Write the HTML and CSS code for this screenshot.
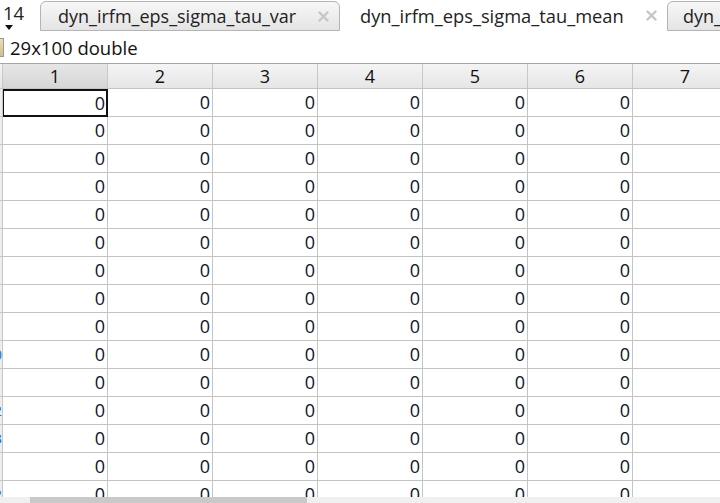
FILE: index.html
```html
<!DOCTYPE html>
<html lang="en">
<head>
    <meta charset="UTF-8">
    <title>Variables - dyn_irfm_eps_sigma_tau_mean</title>
    <link rel="stylesheet" href="styles.css">
</head>
<body>
<div class="tabbar">
    <div class="tab-menu">
        <span class="tab-count">14</span>
        <span class="tab-arrow"></span>
    </div>
    <div class="tab tab-first">
        <span class="tab-name">dyn_irfm_eps_sigma_tau_var</span>
        <svg class="tab-close" width="11" height="11" viewBox="0 0 11 11"><path d="M1.5 1.5 L9.5 9.5 M9.5 1.5 L1.5 9.5"/></svg>
    </div>
    <div class="tab tab-active">
        <span class="tab-name">dyn_irfm_eps_sigma_tau_mean</span>
        <svg class="tab-close" width="11" height="11" viewBox="0 0 11 11"><path d="M1.5 1.5 L9.5 9.5 M9.5 1.5 L1.5 9.5"/></svg>
    </div>
    <div class="tab tab-last">
        <span class="tab-name">dyn_irfm_eps_sigma_tau_std</span>
    </div>
</div>

<div class="info">
    <span class="info-icon"></span>
    <span class="info-text">29x100 double</span>
</div>

<div class="sheet">
    <div class="grid" id="grid">
        <div class="corner"></div>
        <div class="colhead selected">1</div>
        <div class="colhead">2</div>
        <div class="colhead">3</div>
        <div class="colhead">4</div>
        <div class="colhead">5</div>
        <div class="colhead">6</div>
        <div class="colhead">7</div>
    </div>
    <div class="scrollbar">
        <div class="scroll-thumb"></div>
    </div>
</div>

<script>
    const grid = document.getElementById("grid");
    const marks = { 9: "0", 11: "2", 12: "3", 13: "1", 14: "2" };

    for (let r = 0; r < 15; r++) {
        const side = document.createElement("div");
        side.className = "rowhead";
        side.textContent = marks[r] || "";
        grid.appendChild(side);

        for (let c = 0; c < 7; c++) {
            const cell = document.createElement("div");
            cell.className = "cell";
            if (r === 0 && c === 0) cell.classList.add("current");
            cell.textContent = c < 6 ? "0" : "";
            grid.appendChild(cell);
        }
    }
</script>
</body>
</html>
```

FILE: styles.css
```css
* {
    box-sizing: border-box;
}

body {
    margin: 0;
    width: 720px;
    height: 503px;
    overflow: hidden;
    background: #fff;
    font-family: "Open Sans", "Noto Sans", sans-serif;
    color: #1a1a1a;
}

.tabbar {
    display: flex;
    height: 31px;
    background: #fff;
    overflow: hidden;
}

.tab-menu {
    position: relative;
    width: 40px;
    flex: none;
}

.tab-count {
    display: block;
    padding: 1px 0 0 3px;
    font-size: 18.5px;
    line-height: 24px;
    color: #222;
}

.tab-arrow {
    position: absolute;
    left: 5px;
    top: 25px;
    border-left: 4px solid transparent;
    border-right: 4px solid transparent;
    border-top: 5px solid #111;
}

.tab {
    display: flex;
    align-items: center;
    flex: none;
    height: 31px;
    font-size: 18px;
    color: #222;
}

.tab-first,
.tab-last {
    margin-top: 1px;
    height: 30px;
    background: linear-gradient(to bottom, #f7f7f7, #e4e4e4);
    border: 1px solid #b4b4b4;
    border-radius: 6px 6px 0 0;
}

.tab-first {
    width: 300px;
    padding-left: 17px;
}

.tab-active {
    width: 327px;
    padding-left: 20px;
    background: #fff;
    font-size: 18.3px;
}

.tab-last {
    width: 80px;
    padding-left: 15px;
}

.tab-name {
    flex: none;
}

.tab-close {
    margin-left: auto;
    margin-right: 10px;
    stroke: #c6c6c6;
    stroke-width: 2.4;
    stroke-linecap: round;
}

.info {
    display: flex;
    align-items: center;
    height: 32px;
}

.info-icon {
    width: 4px;
    height: 19px;
    background: linear-gradient(to bottom, #e9dfb8, #cfc08a);
    border: 1px solid #9a9a9a;
    border-left: none;
}

.info-text {
    padding-left: 6px;
    font-size: 18.5px;
    color: #111;
}

.sheet {
    position: relative;
    height: 440px;
    overflow: hidden;
    border-top: 1px solid #a6a6a6;
}

.grid {
    display: grid;
    grid-template-columns: 3px repeat(7, 105px);
    grid-auto-rows: 28px;
    grid-template-rows: 25px;
}

.corner,
.colhead {
    background: linear-gradient(to bottom, #f4f4f4, #e6e6e6);
    border-bottom: 1px solid #c4c4c4;
}

.corner {
    border-right: 1px solid #c8c8c8;
}

.colhead {
    border-right: 1px solid #c8c8c8;
    text-align: center;
    font-size: 18px;
    line-height: 24px;
    color: #111;
}

.colhead.selected {
    background: linear-gradient(to bottom, #e6e6e6, #d6d6d6);
}

.rowhead {
    background: #ededed;
    border-right: 1px solid #c8c8c8;
    border-bottom: 1px solid #c8c8c8;
    overflow: hidden;
    direction: rtl;
    font-size: 15px;
    line-height: 27px;
    color: #1f6fd0;
}

.cell {
    border-right: 1px solid #c4c4c4;
    border-bottom: 1px solid #c4c4c4;
    padding-right: 2px;
    text-align: right;
    font-size: 18px;
    line-height: 27px;
    color: #10142a;
}

.cell.current {
    border: 2px solid #111;
    border-left-width: 1px;
    line-height: 24px;
    padding-right: 1px;
}

.scrollbar {
    position: absolute;
    left: 0;
    right: 0;
    bottom: 0;
    height: 6px;
    background: #f0f0f0;
}

.scroll-thumb {
    width: 277px;
    height: 6px;
    margin-left: 30px;
    background: #c9c9c9;
}
```
